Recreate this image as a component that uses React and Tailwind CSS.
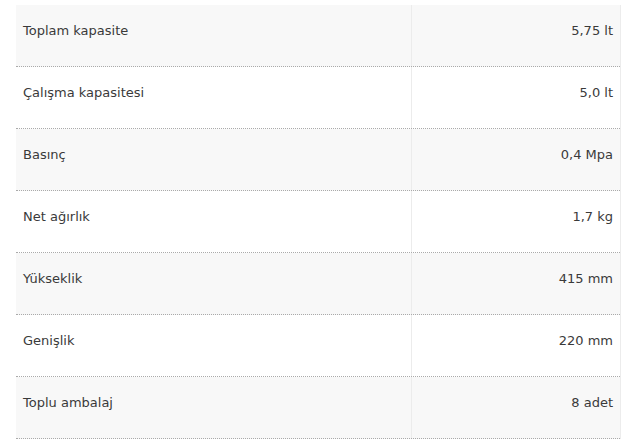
const rows = [
  ['Toplam kapasite', '5,75 lt'],
  ['Çalışma kapasitesi', '5,0 lt'],
  ['Basınç', '0,4 Mpa'],
  ['Net ağırlık', '1,7 kg'],
  ['Yükseklik', '415 mm'],
  ['Genişlik', '220 mm'],
  ['Toplu ambalaj', '8 adet'],
]

export default function App() {
  return (
    <div className="w-[632px] h-[443px] overflow-hidden bg-white pt-[5px] pl-4 text-[#3a3a3a] text-[13px]" style={{ fontFamily: '"DejaVu Sans", Verdana, sans-serif' }}>
      <div className="w-[605px] border-r border-[#ececec]">
        {rows.map(([label, value], i) => (
          <div key={label} className={`flex h-[62px] border-b border-dotted border-[#aaa] ${i % 2 === 0 ? 'bg-[#f8f8f8]' : 'bg-white'}`}>
            <div className="w-[396px] border-r border-[#ececec] pl-[7px] pt-[16px]">{label}</div>
            <div className="flex-1 text-right pr-[7px] pt-[16px]">{value}</div>
          </div>
        ))}
      </div>
    </div>
  )
}
